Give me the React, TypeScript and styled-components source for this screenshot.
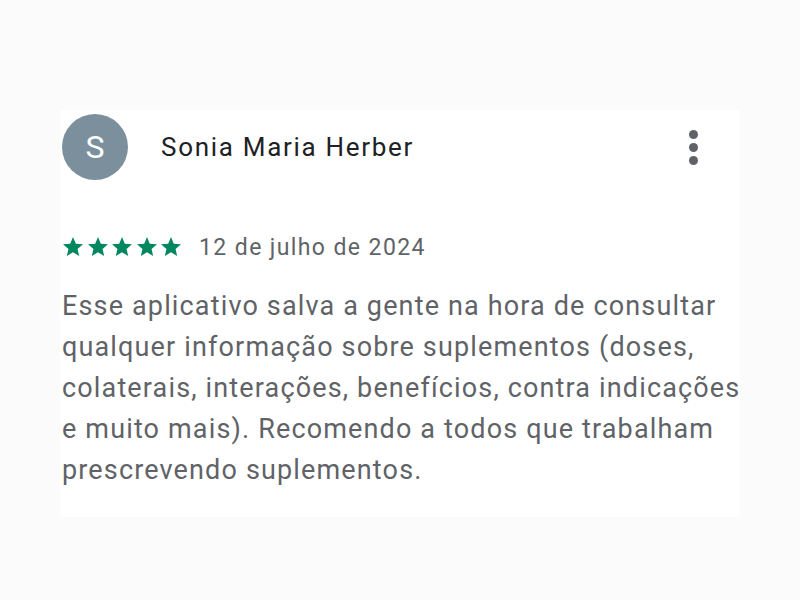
import React from 'react';
import styled, { createGlobalStyle } from 'styled-components';

const GlobalStyle = createGlobalStyle`
  html, body {
    margin: 0;
    padding: 0;
    background: #fbfbfb;
    font-family: Roboto, "Noto Sans", sans-serif;
  }
`;

const Page = styled.div`
  width: 800px;
  height: 600px;
  padding: 110px 0 0 60px;
  box-sizing: border-box;
`;

const Card = styled.div`
  width: 680px;
  background: #ffffff;
  padding: 4px 0 26px 2px;
  box-sizing: border-box;
`;

const Header = styled.div`
  display: flex;
  align-items: center;
  height: 66px;
`;

const Avatar = styled.div`
  width: 66px;
  height: 66px;
  border-radius: 50%;
  background: #7b909c;
  color: #ffffff;
  display: flex;
  align-items: center;
  justify-content: center;
  font-size: 32px;
  flex-shrink: 0;
`;

const Name = styled.div`
  margin-left: 33px;
  font-size: 26px;
  letter-spacing: 1.7px;
  color: #202124;
  flex: 1;
`;

const MoreButton = styled.div`
  width: 10px;
  display: flex;
  flex-direction: column;
  gap: 4px;
  margin-right: 42px;
  align-items: center;
`;

const Dot = styled.span`
  width: 9px;
  height: 9px;
  border-radius: 50%;
  background: #5f6368;
`;

const Meta = styled.div`
  display: flex;
  align-items: center;
  margin-top: 52px;
  height: 30px;
`;

const Stars = styled.div`
  display: flex;
  gap: 0.5px;
  margin-left: -1px;
`;

const DateText = styled.span`
  margin-left: 16px;
  font-size: 23px;
  letter-spacing: 1.4px;
  color: #5f6368;
`;

const Body = styled.p`
  margin: 24px 0 0;
  font-size: 27px;
  letter-spacing: 1.15px;
  line-height: 41px;
  color: #5f6368;
  width: 680px;
`;

const Star = () => (
  <svg width="24" height="24" viewBox="0 0 24 24">
    <path fill="#01875f" d="M12 17.27L18.18 21l-1.64-7.03L22 9.24l-7.19-.61L12 2 9.19 8.63 2 9.24l5.46 4.73L5.82 21z" />
  </svg>
);

export default function App() {
  return (
    <>
      <GlobalStyle />
      <Page>
        <Card>
          <Header>
            <Avatar>S</Avatar>
            <Name>Sonia Maria Herber</Name>
            <MoreButton>
              <Dot />
              <Dot />
              <Dot />
            </MoreButton>
          </Header>
          <Meta>
            <Stars>
              {[0, 1, 2, 3, 4].map(i => <Star key={i} />)}
            </Stars>
            <DateText>12 de julho de 2024</DateText>
          </Meta>
          <Body>
            Esse aplicativo salva a gente na hora de consultar qualquer informação sobre suplementos (doses, colaterais, interações, benefícios, contra indicações e muito mais). Recomendo a todos que trabalham prescrevendo suplementos.
          </Body>
        </Card>
      </Page>
    </>
  );
}
